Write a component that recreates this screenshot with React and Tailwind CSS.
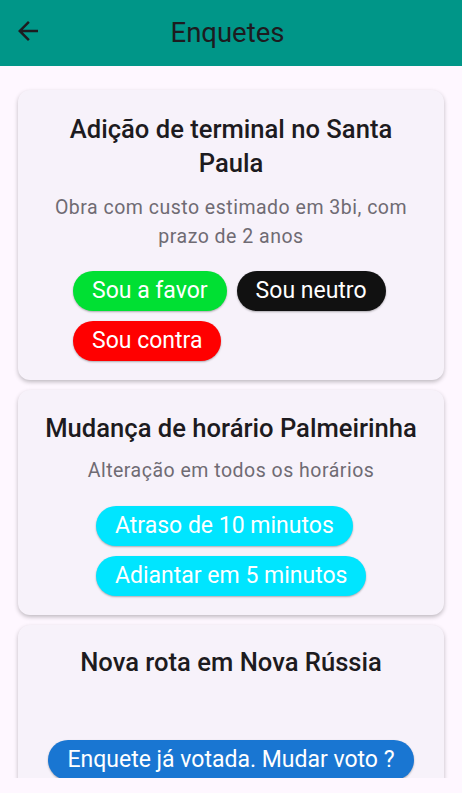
import React from "react";

const font = { fontFamily: "Roboto, 'Noto Sans', sans-serif" };

function Pill({ children, className }) {
  return (
    <div
      className={`h-[40px] rounded-full px-[19px] flex items-center text-[23px] text-white shadow-[0_1px_2px_rgba(0,0,0,0.3)] whitespace-nowrap ${className}`}
    >
      {children}
    </div>
  );
}

export default function App() {
  return (
    <div className="w-[462px] h-[793px] bg-[#fef7ff] flex flex-col overflow-hidden" style={font}>
      <div className="h-[66px] bg-[#009688] flex items-center relative shrink-0">
        <div className="absolute left-[13px] top-[16px]">
          <svg width="30" height="30" viewBox="0 0 24 24">
            <path
              d="M20 11H7.83l5.59-5.59L12 4l-8 8 8 8 1.41-1.41L7.83 13H20v-2z"
              fill="#1d1b20"
            />
          </svg>
        </div>
        <div className="w-full text-center text-[27.5px] text-[#1d1b20] pr-[7px]">Enquetes</div>
      </div>
      <div className="h-[712px] overflow-hidden shrink-0 px-[18px] pt-[24px] flex flex-col gap-[10px]">
        <div className="bg-[#f7f2fa] rounded-[12px] shadow-[0_2px_4px_rgba(0,0,0,0.25)] pt-[22px] pb-[19px] flex flex-col items-center shrink-0">
          <div className="text-[25.6px] font-medium text-[#1d1b20] text-center leading-[34px] px-[20px]">
            Adição de terminal no Santa Paula
          </div>
          <div className="mt-[13px] text-[19.5px] text-[#6f6b73] text-center leading-[29px] tracking-[0.5px] px-[20px]">
            Obra com custo estimado em 3bi, com prazo de 2 anos
          </div>
          <div className="mt-[20px] w-[316px] flex flex-wrap gap-[10px]">
            <Pill className="bg-[#00e033]">Sou a favor</Pill>
            <Pill className="bg-[#111111]">Sou neutro</Pill>
            <Pill className="bg-[#ff0000]">Sou contra</Pill>
          </div>
        </div>
        <div className="bg-[#f7f2fa] rounded-[12px] shadow-[0_2px_4px_rgba(0,0,0,0.25)] pt-[21px] pb-[19px] flex flex-col items-center shrink-0">
          <div className="text-[25.6px] font-medium text-[#1d1b20] text-center leading-[34px]">
            Mudança de horário Palmeirinha
          </div>
          <div className="mt-[11px] text-[19.5px] text-[#6f6b73] text-center leading-[29px] tracking-[0.5px]">
            Alteração em todos os horários
          </div>
          <div className="mt-[21px] w-[270px] flex flex-wrap gap-[10px]">
            <Pill className="bg-[#00e5ff]">Atraso de 10 minutos</Pill>
            <Pill className="bg-[#00e5ff]">Adiantar em 5 minutos</Pill>
          </div>
        </div>
        <div className="bg-[#f7f2fa] rounded-[12px] shadow-[0_2px_4px_rgba(0,0,0,0.25)] pt-[20px] pb-[19px] flex flex-col items-center shrink-0">
          <div className="text-[25.6px] font-medium text-[#1d1b20] text-center leading-[34px]">
            Nova rota em Nova Rússia
          </div>
          <div className="h-[61px]" />
          <Pill className="bg-[#1976d2]">Enquete já votada. Mudar voto ?</Pill>
        </div>
      </div>
    </div>
  );
}
